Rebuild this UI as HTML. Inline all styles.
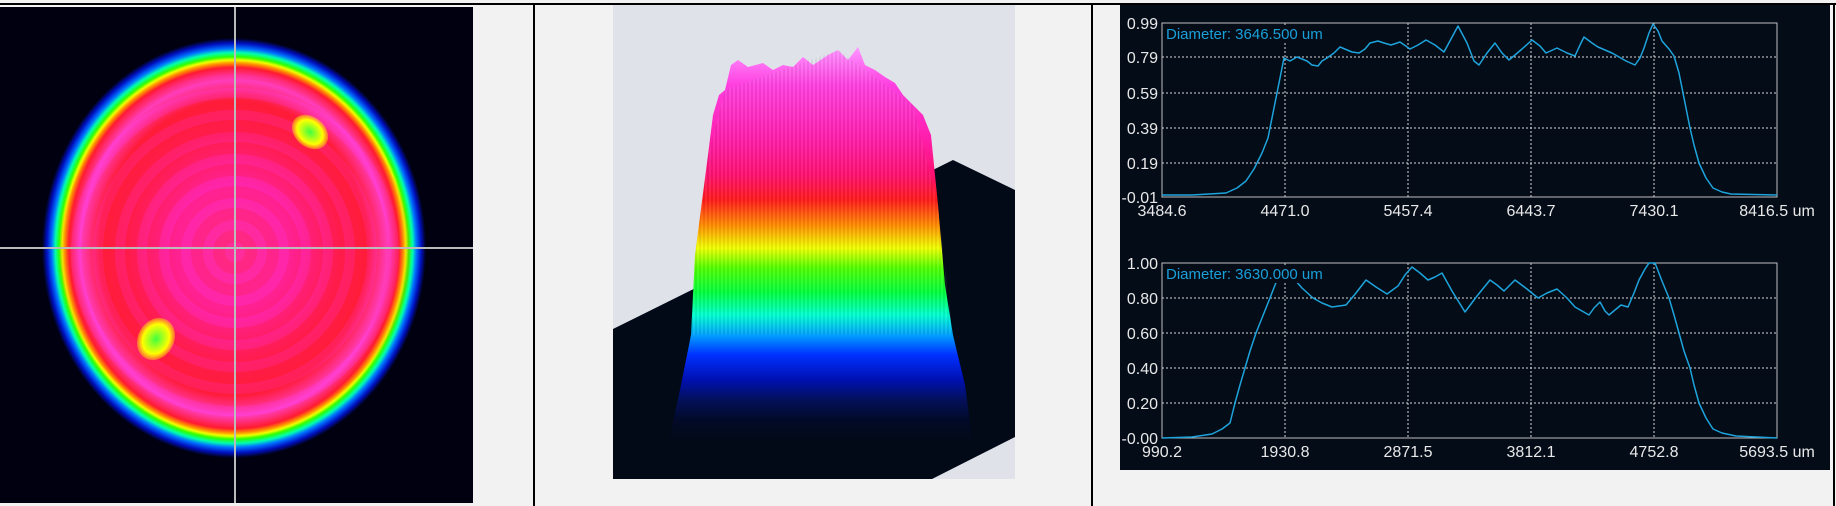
<!DOCTYPE html>
<html><head><meta charset="utf-8"><style>
html,body{margin:0;padding:0}
body{width:1836px;height:506px;background:#f2f2f2;position:relative;overflow:hidden;font-family:"Liberation Sans",sans-serif}
.abs{position:absolute}
</style></head><body>
<div class="abs" style="left:0;top:3px;width:1836px;height:2px;background:#000"></div>
<div class="abs" style="left:533px;top:3px;width:2px;height:503px;background:#000"></div>
<div class="abs" style="left:1091px;top:3px;width:2px;height:503px;background:#000"></div>
<div class="abs" style="left:1833px;top:3px;width:2px;height:503px;background:#000"></div>

<!-- beam 2D -->
<div class="abs" style="left:0;top:7px;width:473px;height:496px;background:#000;overflow:hidden">
 <div class="abs" style="left:0;top:0;width:473px;height:496px;background:radial-gradient(ellipse 192px 210px at 234px 241px,#ff2a8a 0%,#ff20a0 30%,#ff1a50 55%,#ff1a3a 70%,#ff40d0 80%,#ff1a30 86%,#ff9000 88%,#f0ff00 89.5%,#30ff00 91%,#00ffb0 93%,#0070ff 95%,#0010c0 97.5%,#000010 100%)"></div>
 <div class="abs" style="left:60px;top:70px;width:350px;height:350px;border-radius:50%;background:repeating-radial-gradient(circle at 175px 175px,rgba(255,60,220,0.18) 0 10px,rgba(255,40,40,0.12) 10px 22px)"></div>
 <div class="abs" style="left:290px;top:110px;width:40px;height:30px;border-radius:50%;background:radial-gradient(#40ff40,#ffff00 50%,rgba(255,200,0,0) 80%);transform:rotate(40deg)"></div>
 <div class="abs" style="left:138px;top:310px;width:36px;height:44px;border-radius:50%;background:radial-gradient(#40ff40,#ffff00 50%,rgba(255,200,0,0) 80%);transform:rotate(30deg)"></div>
 <div class="abs" style="left:0;top:240px;width:473px;height:2px;background:#bbb"></div>
 <div class="abs" style="left:234px;top:0;width:2px;height:496px;background:#bbb"></div>
</div>

<!-- 3D -->
<div class="abs" style="left:613px;top:5px;width:402px;height:474px;background:#dfe2e9;overflow:hidden">
 <svg width="402" height="474" style="position:absolute;left:0;top:0">
  <polygon points="0,324 340,155 402,185 402,432 319,474 0,474" fill="#020a18"/>
 </svg>
 <div class="abs" style="left:0;top:0;width:402px;height:474px;clip-path:polygon(55px 440px,68px 380px,78px 330px,82px 250px,95px 150px,100px 110px,106px 90px,112px 85px,118px 60px,125px 55px,135px 62px,150px 58px,160px 65px,170px 60px,180px 62px,190px 52px,200px 60px,215px 50px,225px 45px,235px 55px,245px 42px,252px 60px,262px 65px,272px 72px,282px 78px,290px 90px,300px 100px,310px 110px,318px 130px,325px 200px,332px 280px,340px 330px,352px 380px,360px 440px);background:linear-gradient(to bottom,#ff90ff 45px,#ff40e0 80px,#ff20b0 130px,#ff1070 170px,#ff1a1a 195px,#ff8a00 220px,#f0ff00 243px,#50ff00 263px,#00ff40 288px,#00ffd0 310px,#00a0ff 330px,#0030ff 350px,#0010b0 375px,#03105a 395px,#020a28 415px,#020a18 435px)"></div>
 <div class="abs" style="left:0;top:0;width:402px;height:400px;clip-path:polygon(78px 330px,82px 250px,95px 150px,112px 85px,225px 45px,300px 100px,325px 200px,340px 330px);background:repeating-linear-gradient(90deg,rgba(255,255,255,0.06) 0 2px,rgba(0,0,0,0.05) 2px 4px)"></div>
</div>

<!-- charts -->
<div class="abs" style="left:1120px;top:5px;width:710px;height:465px;background:#040c18"></div>
<svg class="abs" style="left:1120px;top:5px" width="710" height="465">
 <g font-family="Liberation Sans, sans-serif" font-size="16" fill="#e8e8e8">
  <g stroke="#d8d8d8" stroke-width="1" stroke-dasharray="2,2">
   <line x1="42" y1="52" x2="657" y2="52"/><line x1="42" y1="88" x2="657" y2="88"/>
   <line x1="42" y1="123" x2="657" y2="123"/><line x1="42" y1="158" x2="657" y2="158"/>
   <line x1="165" y1="18" x2="165" y2="192"/><line x1="288" y1="18" x2="288" y2="192"/>
   <line x1="411" y1="18" x2="411" y2="192"/><line x1="534" y1="18" x2="534" y2="192"/>
  </g>
  <rect x="42" y="18" width="615" height="174" fill="none" stroke="#bfbfbf"/>
  <text x="38" y="24" text-anchor="end">0.99</text>
  <text x="38" y="58" text-anchor="end">0.79</text>
  <text x="38" y="94" text-anchor="end">0.59</text>
  <text x="38" y="129" text-anchor="end">0.39</text>
  <text x="38" y="164" text-anchor="end">0.19</text>
  <text x="38" y="198" text-anchor="end">-0.01</text>
  <text x="42" y="211" text-anchor="middle">3484.6</text>
  <text x="165" y="211" text-anchor="middle">4471.0</text>
  <text x="288" y="211" text-anchor="middle">5457.4</text>
  <text x="411" y="211" text-anchor="middle">6443.7</text>
  <text x="534" y="211" text-anchor="middle">7430.1</text>
  <text x="657" y="211" text-anchor="middle">8416.5 um</text>
  <g transform="translate(42,18)">
   <polyline fill="none" stroke="#1ea4dc" stroke-width="1.5" stroke-linejoin="round" points="0,172 30,172 64,170 75,165 84,158 92,146 100,130 106,115 111,90 115,70 119,50 122,35 128,38 135,34 145,38 150,42 156,43 160,38 165,35 172,30 178,24 190,29 197,30 203,26 208,20 216,18 222,20 229,22 238,19 248,26 256,22 264,17 273,22 282,29 289,16 296,3 305,20 312,38 317,42 325,30 333,20 340,30 347,37 353,32 360,26 370,17 378,23 384,30 395,25 405,30 413,33 418,22 422,14 430,20 436,24 450,30 464,38 473,42 478,35 482,25 487,10 491,1 496,8 500,18 507,26 512,33 517,50 521,70 528,105 532,122 537,140 544,155 551,165 560,169 569,171 615,172"/>
  </g>
  <rect x="44" y="20" width="148" height="18" fill="#040c18"/>
  <text x="46" y="34" fill="#1aa0d8" font-size="15">Diameter: 3646.500 um</text>

  <g stroke="#d8d8d8" stroke-width="1" stroke-dasharray="2,2">
   <line x1="42" y1="293" x2="657" y2="293"/><line x1="42" y1="328" x2="657" y2="328"/>
   <line x1="42" y1="363" x2="657" y2="363"/><line x1="42" y1="398" x2="657" y2="398"/>
   <line x1="165" y1="258" x2="165" y2="433"/><line x1="288" y1="258" x2="288" y2="433"/>
   <line x1="411" y1="258" x2="411" y2="433"/><line x1="534" y1="258" x2="534" y2="433"/>
  </g>
  <rect x="42" y="258" width="615" height="175" fill="none" stroke="#bfbfbf"/>
  <text x="38" y="264" text-anchor="end">1.00</text>
  <text x="38" y="299" text-anchor="end">0.80</text>
  <text x="38" y="334" text-anchor="end">0.60</text>
  <text x="38" y="369" text-anchor="end">0.40</text>
  <text x="38" y="404" text-anchor="end">0.20</text>
  <text x="38" y="439" text-anchor="end">-0.00</text>
  <text x="42" y="452" text-anchor="middle">990.2</text>
  <text x="165" y="452" text-anchor="middle">1930.8</text>
  <text x="288" y="452" text-anchor="middle">2871.5</text>
  <text x="411" y="452" text-anchor="middle">3812.1</text>
  <text x="534" y="452" text-anchor="middle">4752.8</text>
  <text x="657" y="452" text-anchor="middle">5693.5 um</text>
  <g transform="translate(42,258)">
   <polyline fill="none" stroke="#1ea4dc" stroke-width="1.5" stroke-linejoin="round" points="0,175 30,174 50,171 60,166 68,160 73,140 78,122 83,105 88,88 94,70 100,55 108,35 115,17 125,10 133,17 140,25 151,35 160,40 170,44 184,42 194,30 204,17 214,24 225,31 236,23 243,12 250,4 258,10 266,17 273,14 280,10 290,28 303,49 315,33 328,17 335,22 342,28 353,17 365,26 376,35 385,30 395,26 405,35 413,44 420,48 427,52 432,45 438,39 443,48 447,52 453,47 459,42 466,44 472,30 477,17 483,6 487,0 493,0 500,18 507,35 512,52 517,70 522,88 528,105 532,122 537,140 544,155 551,166 560,170 574,173 615,175"/>
  </g>
  <rect x="44" y="260" width="148" height="18" fill="#040c18"/>
  <text x="46" y="274" fill="#1aa0d8" font-size="15">Diameter: 3630.000 um</text>
 </g>
</svg>
</body></html>
